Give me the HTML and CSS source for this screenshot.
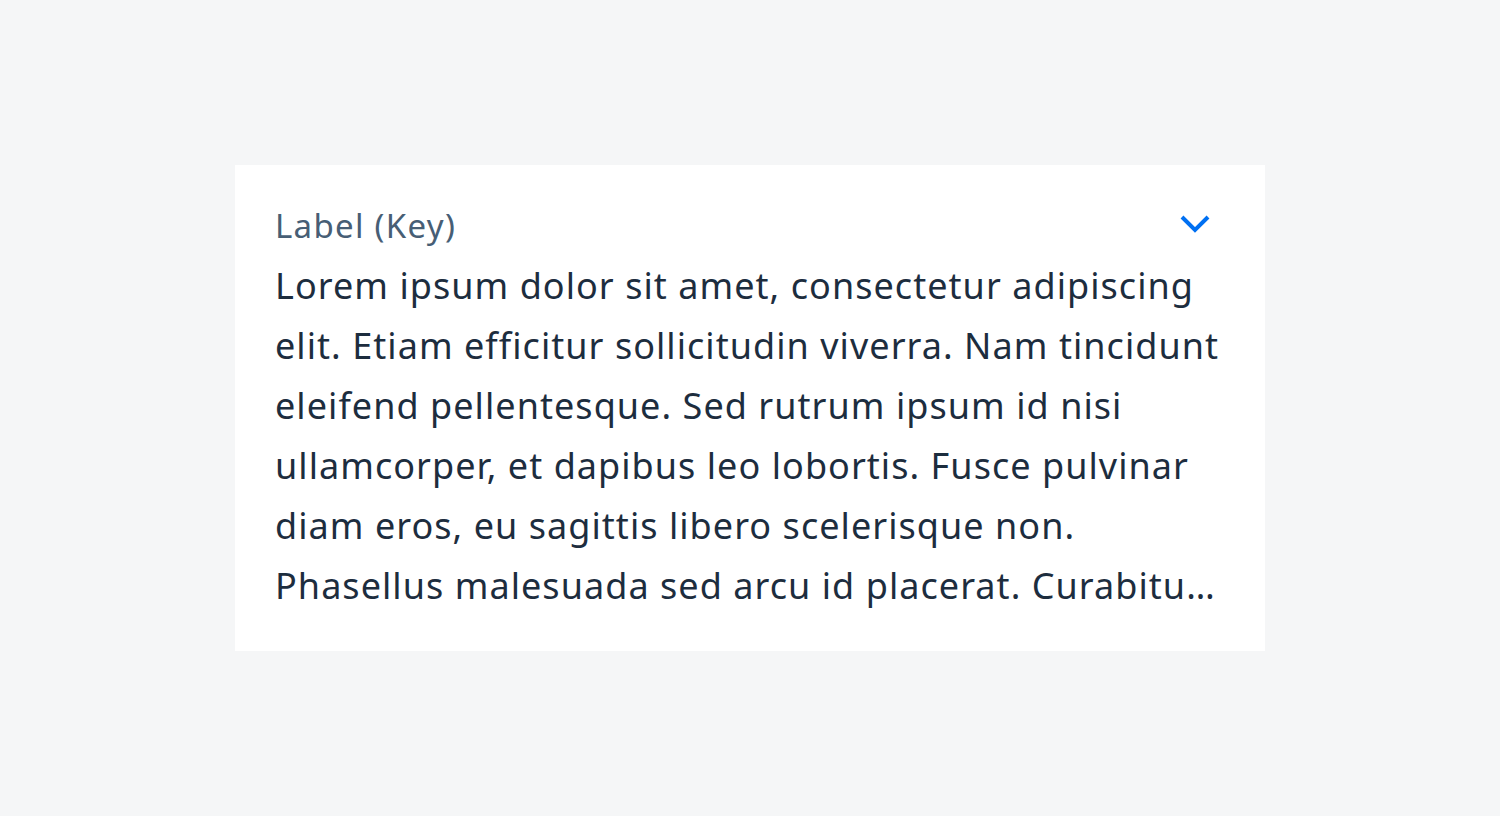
FILE: index.html
```html
<!DOCTYPE html>
<html lang="en">
<head>
    <meta charset="UTF-8">
    <title>Expandable Text</title>
    <link rel="stylesheet" href="styles.css">
</head>
<body>
    <div class="card">
        <div class="card-header">
            <span class="label">Label (Key)</span>
            <button class="toggle" aria-label="Expand">
                <svg width="34" height="22" viewBox="0 0 34 22">
                    <path d="M4 4 L17 17 L30 4" fill="none" stroke="#0070f2" stroke-width="4"/>
                </svg>
            </button>
        </div>
        <p class="text">Lorem ipsum dolor sit amet, consectetur adipiscing elit. Etiam efficitur sollicitudin viverra. Nam tincidunt eleifend pellentesque. Sed rutrum ipsum id nisi ullamcorper, et dapibus leo lobortis. Fusce pulvinar diam eros, eu sagittis libero scelerisque non. Phasellus malesuada sed arcu id placerat. Curabitur vel lectus sed ante tempor fermentum nec vitae massa.</p>
    </div>
</body>
</html>
```

FILE: styles.css
```css
body {
    margin: 0;
    height: 816px;
    background-color: #f5f6f7;
    font-family: "Noto Sans", "Open Sans", sans-serif;
}

.card {
    position: relative;
    top: 165px;
    left: 235px;
    width: 950px;
    padding: 41px 40px 35px 40px;
    background: #ffffff;
}

.card-header {
    display: flex;
    justify-content: space-between;
    align-items: flex-start;
    height: 50px;
}

.label {
    font-size: 33px;
    line-height: 40px;
    letter-spacing: 1.3px;
    color: #475e75;
}

.toggle {
    background: none;
    border: none;
    padding: 0;
    margin: 7px 13px 0 0;
    cursor: pointer;
}

.text {
    margin: 0;
    font-size: 36px;
    line-height: 60px;
    letter-spacing: 1.05px;
    color: #1d2d3e;
    display: -webkit-box;
    -webkit-box-orient: vertical;
    -webkit-line-clamp: 6;
    overflow: hidden;
}
```
